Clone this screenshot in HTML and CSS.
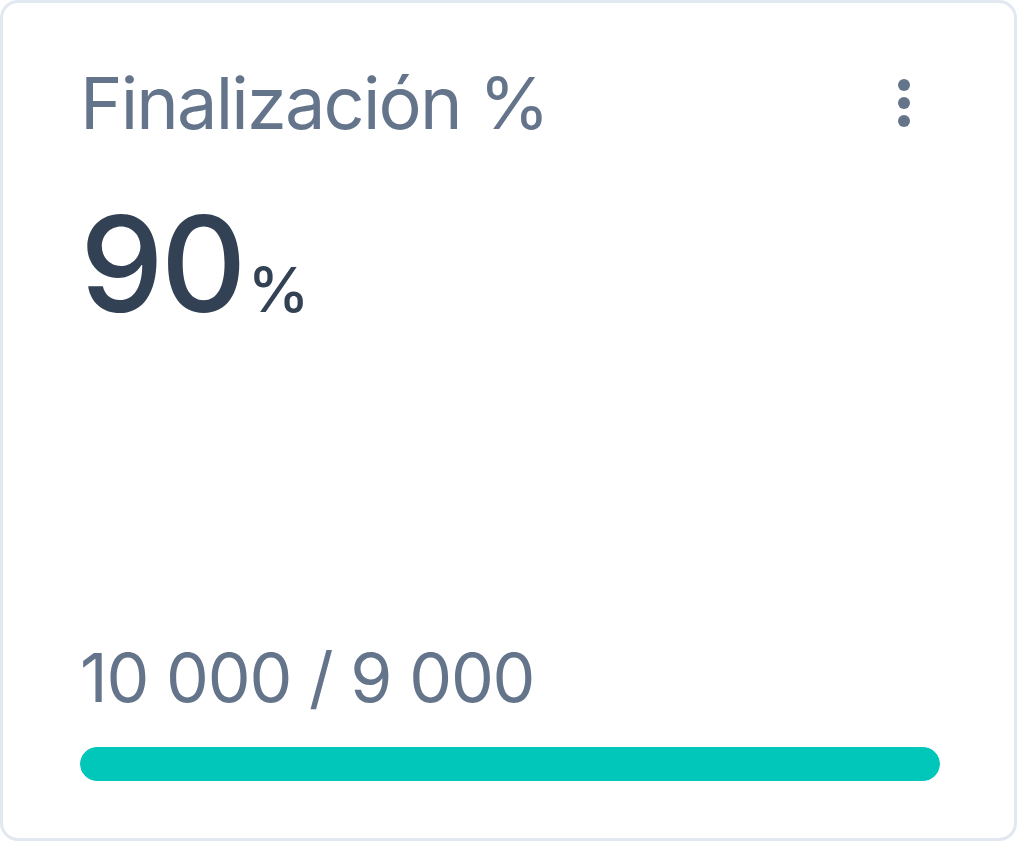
FILE: index.html
```html
<!DOCTYPE html>
<html lang="es">
<head>
<meta charset="utf-8">
<link rel="stylesheet" href="styles.css">
</head>
<body>
<div class="card">
  <div class="card-head">
    <div class="title">Finalización %</div>
    <button class="menu" aria-label="Más opciones">
      <svg width="16" height="52" viewBox="0 0 16 52"><circle cx="8" cy="8" r="6"/><circle cx="8" cy="26" r="6"/><circle cx="8" cy="44" r="6"/></svg>
    </button>
  </div>
  <div class="value"><span class="num">90</span><span class="unit">%</span></div>
  <div class="spacer"></div>
  <div class="ratio">10 000 / 9 000</div>
  <div class="bar"><div class="fill" style="width:100%"></div></div>
</div>
</body>
</html>
```

FILE: styles.css
```css
html, body {
  margin: 0;
  padding: 0;
  background: #ffffff;
}
body {
  font-family: "Inter", "Noto Sans", sans-serif;
  width: 1020px;
  height: 842px;
}
.card {
  box-sizing: border-box;
  width: 1017px;
  height: 841px;
  border: 3px solid #e2e8f0;
  border-radius: 18px;
  background: #fff;
  padding: 64px 74px 57px 77px;
  display: flex;
  flex-direction: column;
}
.card-head {
  display: flex;
  align-items: center;
  justify-content: space-between;
}
.title {
  font-size: 72px;
  line-height: 72px;
  letter-spacing: -1.8px;
  color: #64748b;
  font-weight: 400;
}
.menu {
  border: 0;
  background: none;
  padding: 0;
  margin-right: 28px;
  display: flex;
  fill: #64748b;
}
.value {
  margin-top: 58px;
  display: flex;
  align-items: baseline;
  color: #334155;
  line-height: 1;
}
.num {
  font-size: 133px;
  font-weight: 500;
  letter-spacing: -3px;
}
.unit {
  font-size: 62px;
  font-weight: 500;
  margin-left: 4px;
}
.spacer { flex: 1; }
.ratio {
  font-size: 68px;
  line-height: 68px;
  letter-spacing: -1.2px;
  color: #64748b;
}
.bar {
  margin-top: 36px;
  height: 34px;
  border-radius: 17px;
  background: #e2e8f0;
  overflow: hidden;
}
.fill {
  height: 100%;
  background: #00c7b9;
  border-radius: 17px;
}
```
